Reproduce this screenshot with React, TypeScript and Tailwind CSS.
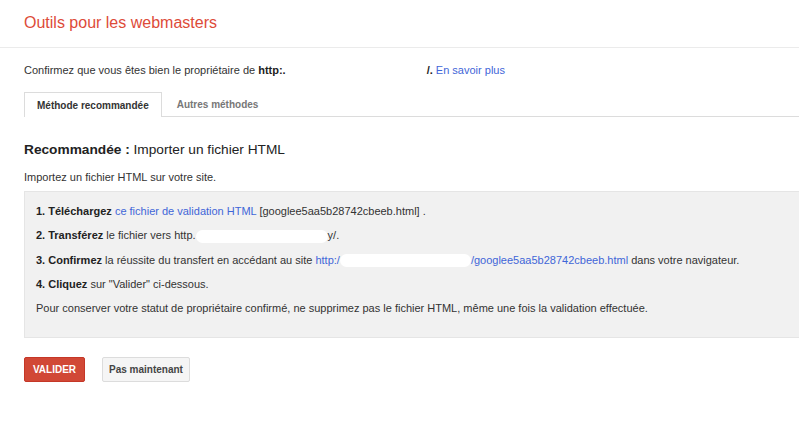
import React from 'react'

const Blob = ({ w }: { w: number }) => (
  <span
    className="inline-block h-[13px] align-middle bg-white rounded-full"
    style={{ width: w }}
  />
)

const steps: React.ReactNode[] = [
  <>
    <b className="font-bold text-[#222]">1. Téléchargez</b>{' '}
    <a className="text-[#3f66d8]">ce fichier de validation HTML</a> [googlee5aa5b28742cbeeb.html] .
  </>,
  <>
    <b className="font-bold text-[#222]">2. Transférez</b> le fichier vers http.
    <Blob w={132} />
    y/.
  </>,
  <>
    <b className="font-bold text-[#222]">3. Confirmez</b> la réussite du transfert en accédant au site{' '}
    <a className="text-[#3f66d8]">
      http:/
      <Blob w={131} />
      /googlee5aa5b28742cbeeb.html
    </a>{' '}
    dans votre navigateur.
  </>,
  <>
    <b className="font-bold text-[#222]">4. Cliquez</b> sur "Valider" ci-dessous.
  </>,
  <>
    Pour conserver votre statut de propriétaire confirmé, ne supprimez pas le fichier HTML, même une fois la
    validation effectuée.
  </>,
]

export default function App() {
  return (
    <div className="min-h-[436px] w-full bg-white text-[#444] font-['Liberation_Sans',Arial,sans-serif] text-[11px] leading-[13px]">
      <header className="h-[48px] border-b border-[#ebebeb] pl-6 pt-[13px]">
        <h1 className="text-[16px] leading-[20px] text-[#dd4b39]">Outils pour les webmasters</h1>
      </header>

      <main className="pl-6">
        <p className="mt-4 text-[#333]">
          Confirmez que vous êtes bien le propriétaire de <b className="font-bold text-[#222]">http:.</b>
          <span className="inline-block w-[141px]" />
          <b className="font-bold text-[#222]">/.</b> <a className="text-[#3f66d8]">En savoir plus</a>
        </p>

        <nav className="mt-[15px] flex items-end text-[10px]">
          <div className="h-[25px] flex items-center px-[12px] border border-b-0 border-[#dcdcdc] font-bold text-[#333]">
            Méthode recommandée
          </div>
          <div className="flex-1 h-[25px] flex items-center border-b border-[#dcdcdc]">
            <span className="px-[15px] font-bold text-[#777]">Autres méthodes</span>
          </div>
        </nav>

        <h2 className="mt-[24px] text-[13.7px] leading-[17px] text-[#222]">
          <b className="font-bold">Recommandée :</b> Importer un fichier HTML
        </h2>

        <p className="mt-[13px] text-[#333]">Importez un fichier HTML sur votre site.</p>

        <div className="mt-[7px] bg-[#f1f1f1] border border-r-0 border-[#e5e5e5] pl-[11px] pt-[13px] pb-[22px] flex flex-col gap-[11px] text-[#333]">
          {steps.map((s, i) => (
            <p key={i}>{s}</p>
          ))}
        </div>

        <div className="mt-[19px] flex gap-[17px]">
          <button className="h-[25px] w-[61px] rounded-[2px] bg-[#d14836] border border-[#c53727] text-white font-bold text-[10px]">
            VALIDER
          </button>
          <button className="h-[25px] w-[88px] rounded-[2px] bg-[#f5f5f5] border border-[#dcdcdc] text-[#444] font-bold text-[10px]">
            Pas maintenant
          </button>
        </div>
      </main>
    </div>
  )
}
